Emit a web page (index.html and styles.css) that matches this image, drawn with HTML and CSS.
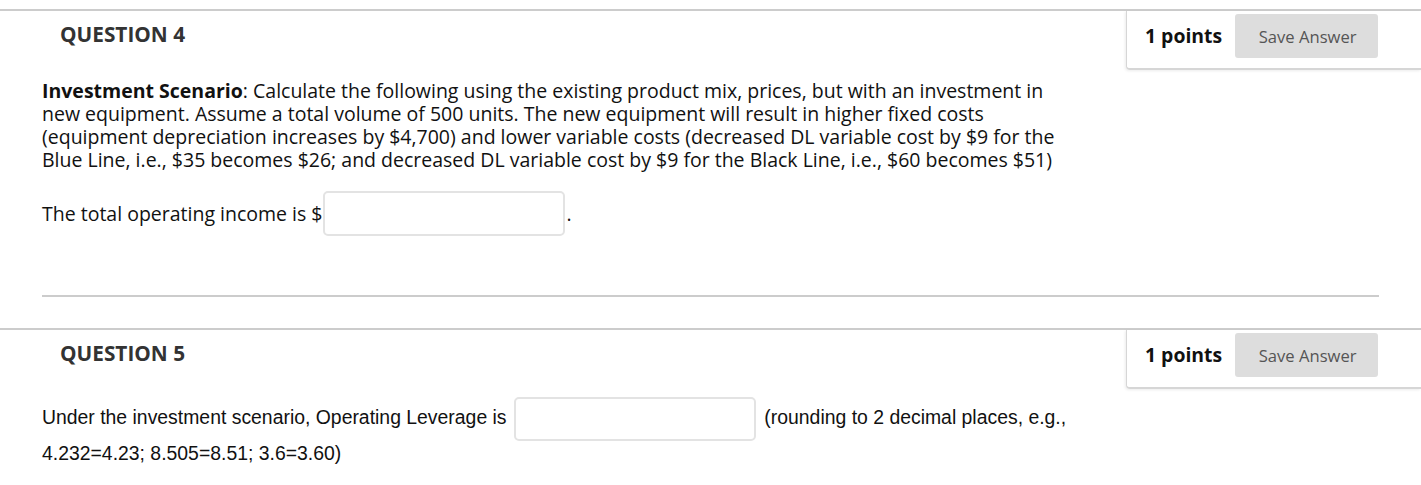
FILE: index.html
```html
<!DOCTYPE html>
<html>
<head>
<meta charset="utf-8">
<link rel="stylesheet" href="styles.css">
</head>
<body>
<div class="question q4">
  <div class="q-header">
    <h3 class="q-title">QUESTION 4</h3>
    <div class="points-box">
      <span class="points">1 points</span>
      <button class="save-btn">Save Answer</button>
    </div>
  </div>
  <div class="q-body">
    <p class="para"><strong>Investment Scenario</strong>: Calculate the following using the existing product mix, prices, but with an investment in new equipment. Assume a total volume of 500 units. The new equipment will result in higher fixed costs (equipment depreciation increases by $4,700) and lower variable costs (decreased DL variable cost by $9 for the Blue Line, i.e., $35 becomes $26; and decreased DL variable cost by $9 for the Black Line, i.e., $60 becomes $51)</p>
    <p class="para answer-line">The total operating income is $<input class="answer" type="text">.</p>
  </div>
  <hr class="sep">
</div>
<div class="question q5">
  <div class="q-header">
    <h3 class="q-title">QUESTION 5</h3>
    <div class="points-box">
      <span class="points">1 points</span>
      <button class="save-btn">Save Answer</button>
    </div>
  </div>
  <div class="q-body arial">
    <p class="para2">Under the investment scenario, Operating Leverage is <input class="answer" type="text"> (rounding to 2 decimal places, e.g., 4.232=4.23; 8.505=8.51; 3.6=3.60)</p>
  </div>
</div>
</body>
</html>
```

FILE: styles.css
```css
html, body {
  margin: 0;
  padding: 0;
  background: #fff;
}
body {
  font-family: "Open Sans", "Liberation Sans", sans-serif;
  color: #111;
}
.question {
  border-top: 2px solid #ccc;
}
.q4 {
  margin-top: 9px;
}
.q5 {
  margin-top: 31px;
}
.q-header {
  display: flex;
  justify-content: space-between;
  align-items: flex-start;
}
.q-title {
  margin: 0;
  padding: 10px 0 0 60px;
  font-size: 20.8px;
  line-height: 26px;
  font-weight: 700;
  color: #333;
}
.points-box {
  box-sizing: border-box;
  width: 295px;
  height: 59px;
  display: flex;
  align-items: flex-start;
  gap: 13px;
  padding: 3px 0 0 18px;
  border-left: 1px solid #d6d6d6;
  border-bottom: 2px solid #d6d6d6;
  border-bottom-left-radius: 4px;
  box-shadow: -1px 1px 3px rgba(0,0,0,0.08);
}
.points {
  font-size: 19.4px;
  font-weight: 700;
  color: #111;
  line-height: 44px;
}
.save-btn {
  width: 143px;
  height: 44px;
  border: none;
  border-radius: 3px;
  background: #ddd;
  color: #555;
  font-family: "Open Sans", sans-serif;
  font-size: 16.6px;
  padding: 0 0 0 2px;
}
.q-body {
  padding: 0 0 0 42px;
  width: 1030px;
}
.para {
  margin: 0;
  font-size: 19.5px;
  line-height: 23px;
}
.q4 .q-body .para:first-child {
  margin-top: 9px;
}
.answer-line {
  margin-top: 20px;
  display: flex;
  align-items: center;
}
.answer {
  box-sizing: border-box;
  width: 242px;
  height: 45px;
  border: 2px solid #e3e3e3;
  border-radius: 5px;
  background: #fff;
  margin: 0 2px 0 0;
  vertical-align: middle;
}
.sep {
  margin: 59px 42px 0 42px;
  border: none;
  border-top: 2px solid #ccc;
  height: 0;
}
.arial {
  font-family: "Liberation Sans", Arial, sans-serif;
}
.para2 {
  margin: 10px 0 0 0;
  font-size: 19.4px;
  line-height: 36px;
}
.para2 .answer {
  margin: -6px 3px -6px 2px;
  height: 44px;
}
```
